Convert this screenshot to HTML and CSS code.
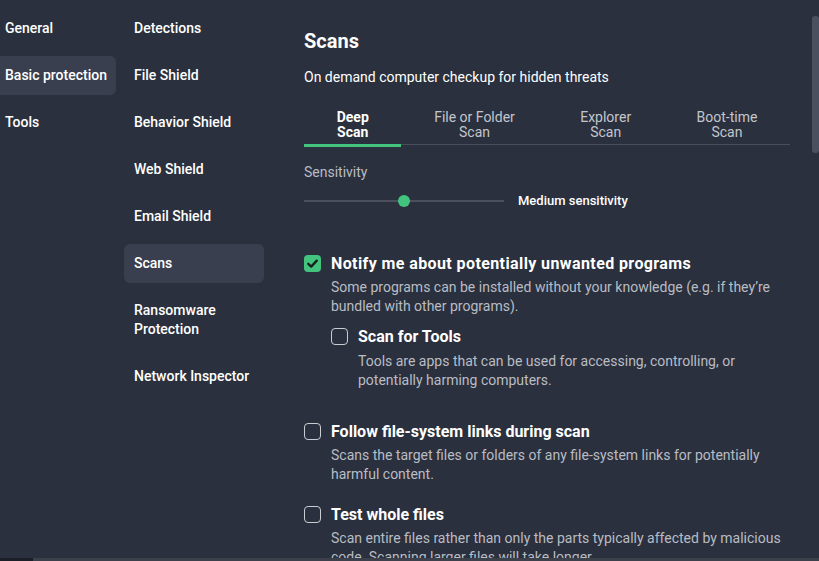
FILE: index.html
```html
<!DOCTYPE html>
<html lang="en">
<head>
<meta charset="utf-8">
<title>Scans settings</title>
<link rel="stylesheet" href="styles.css">
</head>
<body>
<div class="app">
  <nav class="nav nav-main">
    <div class="nav-item">General</div>
    <div class="nav-item active">Basic protection</div>
    <div class="nav-item">Tools</div>
  </nav>
  <nav class="nav nav-sub">
    <div class="nav-item">Detections</div>
    <div class="nav-item">File Shield</div>
    <div class="nav-item">Behavior Shield</div>
    <div class="nav-item">Web Shield</div>
    <div class="nav-item">Email Shield</div>
    <div class="nav-item active">Scans</div>
    <div class="nav-item">Ransomware<br>Protection</div>
    <div class="nav-item">Network Inspector</div>
  </nav>
  <main class="content">
    <h1 class="title">Scans</h1>
    <p class="subtitle">On demand computer checkup for hidden threats</p>
    <div class="tabs">
      <div class="tab active">Deep<br>Scan</div>
      <div class="tab">File or Folder<br>Scan</div>
      <div class="tab">Explorer<br>Scan</div>
      <div class="tab">Boot-time<br>Scan</div>
    </div>
    <div class="sens-label">Sensitivity</div>
    <div class="slider-row">
      <div class="slider">
        <div class="knob"></div>
      </div>
      <span class="slider-value">Medium sensitivity</span>
    </div>

    <div class="option first">
      <div class="check-row">
        <span class="box checked">
          <svg viewBox="0 0 17 17" width="17" height="17"><path d="M4.3 8.8 L7.2 11.6 L12.8 5.6" fill="none" stroke="#15211b" stroke-width="2.3" stroke-linecap="round" stroke-linejoin="round"/></svg>
        </span>
        <span class="label label-wide">Notify me about potentially unwanted programs</span>
      </div>
      <p class="desc">Some programs can be installed without your knowledge (e.g. if they’re bundled with other programs).</p>
      <div class="option nested">
        <div class="check-row">
          <span class="box"></span>
          <span class="label">Scan for Tools</span>
        </div>
        <p class="desc desc-nested">Tools are apps that can be used for accessing, controlling, or potentially harming computers.</p>
      </div>
    </div>

    <div class="option follow">
      <div class="check-row">
        <span class="box"></span>
        <span class="label">Follow file-system links during scan</span>
      </div>
      <p class="desc">Scans the target files or folders of any file-system links for potentially harmful content.</p>
    </div>

    <div class="option whole">
      <div class="check-row">
        <span class="box"></span>
        <span class="label">Test whole files</span>
      </div>
      <p class="desc">Scan entire files rather than only the parts typically affected by malicious code. Scanning larger files will take longer.</p>
    </div>
  </main>
  <div class="vscroll"></div>
  <div class="hscroll"></div>
</div>
</body>
</html>
```

FILE: styles.css
```css
* { box-sizing: border-box; }

html, body {
  margin: 0;
  padding: 0;
  height: 100%;
  overflow: hidden;
  background: #2a303d;
}

body {
  font-family: Roboto, "Liberation Sans", Arial, sans-serif;
  color: #ffffff;
  font-size: 14px;
}

.app {
  position: relative;
  display: flex;
  align-items: flex-start;
  height: 561px;
  overflow: hidden;
}

.nav {
  display: flex;
  flex-direction: column;
  gap: 8px;
  padding-top: 9px;
  flex: none;
}

.nav-main { width: 116px; }

.nav-sub {
  width: 140px;
  margin-left: 8px;
}

.nav-item {
  font-size: 14px;
  font-weight: 500;
  line-height: 19px;
  padding: 10px;
  border-radius: 6px;
  color: #ffffff;
  white-space: nowrap;
}

.nav-main .nav-item {
  padding-left: 5px;
  border-radius: 0 6px 6px 0;
}

.nav-item.active { background: #3a3f50; }

.content {
  width: 486px;
  margin-left: 40px;
  padding-top: 29px;
  flex: none;
}

.title {
  margin: 0;
  font-size: 20px;
  line-height: 24px;
  font-weight: 700;
}

.subtitle {
  margin: 15px 0 0;
  font-size: 14px;
  line-height: 19px;
  font-weight: 400;
}

.tabs {
  display: flex;
  margin-top: 23px;
  border-bottom: 1px solid #4a4f5c;
}

.tab {
  flex: 1 1 auto;
  position: relative;
  text-align: center;
  font-size: 14px;
  line-height: 15px;
  padding-bottom: 4px;
  color: #c3c6cd;
}

.tab.active {
  color: #ffffff;
  font-weight: 700;
}

.tab.active::after {
  content: "";
  position: absolute;
  left: 0;
  right: 0;
  bottom: -3px;
  height: 3px;
  background: #42c47f;
}

.sens-label {
  margin-top: 18px;
  font-size: 14px;
  line-height: 19px;
  color: #b9bcc4;
}

.slider-row {
  display: flex;
  align-items: center;
  margin-top: 9px;
  height: 19px;
}

.slider {
  position: relative;
  width: 200px;
  height: 2px;
  background: #4b505c;
}

.knob {
  position: absolute;
  left: 94px;
  top: -5px;
  width: 12px;
  height: 12px;
  border-radius: 50%;
  background: #42c47f;
}

.slider-value {
  margin-left: 14px;
  font-size: 13px;
  font-weight: 500;
  line-height: 19px;
}

.option { display: block; }
.option.first { margin-top: 44px; }
.option.nested { margin-top: 11px; margin-left: 27px; }
.option.follow { margin-top: 32px; }
.option.whole { margin-top: 21px; }

.check-row {
  display: flex;
  align-items: center;
  gap: 10px;
  height: 19px;
}

.box {
  flex: none;
  width: 17px;
  height: 17px;
  border: 1.5px solid #c9ccd3;
  border-radius: 4px;
  display: flex;
  align-items: center;
  justify-content: center;
}

.box.checked {
  border: none;
  background: #42c47f;
}

.label {
  font-size: 16px;
  font-weight: 700;
  line-height: 19px;
  white-space: nowrap;
}

.label-wide { letter-spacing: 0.4px; }

.desc {
  margin: 5px 0 0;
  padding-left: 27px;
  font-size: 14px;
  line-height: 19px;
  color: #b9bcc4;
}

.desc-nested { margin-top: 6px; }

.vscroll {
  position: absolute;
  left: 812px;
  top: 16px;
  width: 7px;
  height: 137px;
  border-radius: 3px;
  background: #4a5060;
}

.hscroll {
  position: absolute;
  left: 0;
  right: 0;
  bottom: 0;
  height: 3px;
  background: linear-gradient(to right, #1c1f27 0, #1c1f27 33px, #3b404b 33px);
}
```
